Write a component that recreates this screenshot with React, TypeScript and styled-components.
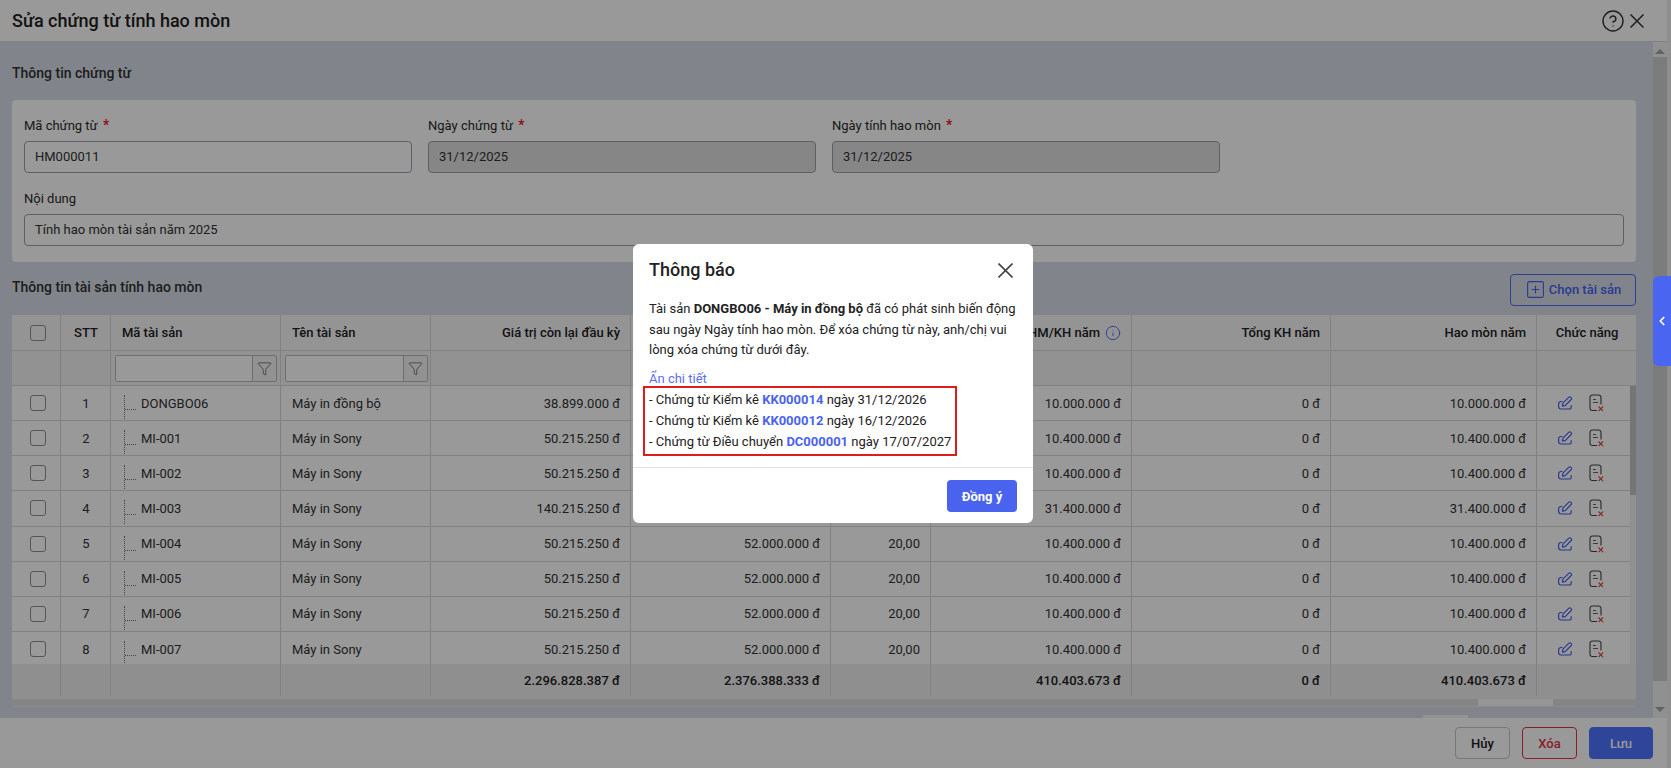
import React from "react";
import styled, { createGlobalStyle } from "styled-components";
import { CircleHelp, Funnel, SquarePlus, Info, ChevronLeft } from "lucide-react";

const Global = createGlobalStyle`
  html, body { margin: 0; padding: 0; height: 100%; overflow: hidden; }
  body { font-family: Roboto, "Noto Sans", sans-serif; color: #212121; background: #e8e8e8; }
  * { box-sizing: border-box; }
`;

const Page = styled.div`
  position: relative; width: 1671px; height: 768px; display: flex; flex-direction: column; overflow: hidden; padding-right: 4px; background: #ededed;
`;
const Header = styled.header`
  height: 42px; flex: none; display: flex; align-items: center; justify-content: space-between; padding: 0 23px 0 12px; background: #fff; border-bottom: 1px solid #d8d8d8;
`;
const PageTitle = styled.h1`
  margin: 0; font-size: 18px; font-weight: 500; color: #212121;
`;
const HeaderIcons = styled.div`
  display: flex; align-items: center; gap: 5px; color: #333; margin-top: 1px;
`;
const Main = styled.div`
  flex: 1; min-height: 0; display: flex; background: #d7dde6;
`;
const Content = styled.main`
  flex: 1; min-width: 0; padding: 0 17px 0 12px; display: flex; flex-direction: column;
`;
const SectionTitle = styled.div`
  font-size: 14px; font-weight: 500; color: #333;
`;
const FirstSection = styled.div`
  height: 58px; flex: none; padding-top: 23px; line-height: 17px;
`;
const Card = styled.section`
  height: 162px; flex: none; background: #fff; border-radius: 4px; padding: 16px 12px 0;
  display: grid; grid-template-columns: repeat(4, 388px); column-gap: 16px; grid-auto-rows: min-content; row-gap: 16px;
`;
const Field = styled.div<{ $full?: boolean }>`
  display: flex; flex-direction: column; gap: 6px; grid-column: ${(p) => (p.$full ? "1 / -1" : "auto")};
  width: ${(p) => (p.$full ? "1600px" : "auto")};
`;
const Label = styled.label`
  font-size: 13px; line-height: 19px; height: 19px; color: #2b2b2b;
  b { color: #e11; font-weight: 500; margin-left: 2px; font-size: 14px; }
`;
const Input = styled.div<{ $disabled?: boolean }>`
  height: 32px; border: 1px solid #9aa0a8; border-radius: 4px; padding: 0 10px; font-size: 13px; line-height: 30px; color: #333;
  background: ${(p) => (p.$disabled ? "#e0e0e0" : "#fff")};
`;
const SectionBar = styled.div`
  height: 53px; flex: none; display: flex; align-items: center; justify-content: space-between; padding-top: 2px;
  & > ${SectionTitle} { margin-top: -5px; }
`;
const OutlineButton = styled.button`
  width: 126px; height: 32px; display: flex; align-items: center; justify-content: center; gap: 3px; padding: 0; border: 1px solid #4d6df2; border-radius: 4px;
  background: transparent; color: #4663ee; font: 500 13px Roboto, sans-serif;
`;
const Table = styled.div`
  flex: none; background: #fff;
`;
const Row = styled.div<{ $kind: "head" | "filter" | "body" | "total" }>`
  display: grid;
  grid-template-columns: 49px 50px 170px 150px 200px 200px 100px 201px 199px 206px ${(p) => (p.$kind === "body" ? "93px" : "99px")};
  height: ${(p) => ({ head: "36px", filter: "35px", body: "35.15px", total: "35px" }[p.$kind])};
  background: ${(p) => ({ head: "#f7f7f7", filter: "#f4f4f4", body: "#fff", total: "#efefef" }[p.$kind])};
  font-weight: ${(p) => (p.$kind === "head" || p.$kind === "total" ? 500 : 400)};
  color: ${(p) => (p.$kind === "head" || p.$kind === "total" ? "#222" : "#333")};
  border-bottom: ${(p) => (p.$kind === "total" ? "3px solid #efefef" : "1px solid #d8d8d8")};
  font-size: 13px;
`;
const Cell = styled.div<{ $align?: "left" | "right" | "center" }>`
  display: flex; align-items: center; padding: 0 10px 0 11px; min-width: 0; white-space: nowrap; border-right: 1px solid #d8d8d8;
  justify-content: ${(p) => (p.$align === "right" ? "flex-end" : p.$align === "center" ? "center" : "flex-start")};
  &:last-child { border-right: none; }
`;
const Checkbox = styled.span`
  width: 16px; height: 16px; border: 1px solid #8f8f8f; border-radius: 3px; background: transparent; flex: none; margin-left: 2px;
`;
const FilterBox = styled.div`
  width: 162px; height: 27px; flex: none; margin-left: -7px; display: flex; border: 1px solid #b8b8b8; border-radius: 2px; background: #f4f4f4;
`;
const FilterBoxSmall = styled(FilterBox)`
  width: 143px;
`;
const FilterField = styled.div`
  flex: 1; background: #fff;
`;
const FilterButton = styled.div`
  width: 24px; flex: none; border-left: 1px solid #b8b8b8; display: flex; align-items: center; justify-content: center; color: #444;
`;
const TreeCode = styled.div`
  position: relative; padding-left: 17px; margin-left: 2px; height: 100%; display: flex; align-items: center;
`;
const TreeLine = styled.span`
  position: absolute; left: 0; top: 9px; height: 24px; width: 11px; border-left: 1px dotted #777;
  &::after { content: ""; position: absolute; left: 0; top: 14px; width: 11px; border-top: 1px dotted #777; }
`;
const InfoIcon = styled(Info)`
  margin-left: 5px; color: #4663ee; flex: none;
`;
const Actions = styled.div`
  display: flex; align-items: center; gap: 16px; margin-left: -7px;
`;
const BodyWrap = styled.div`
  display: flex; height: 278.3px; overflow: hidden;
`;
const Rows = styled.div`
  flex: 1; min-width: 0;
`;
const VRail = styled.div`
  width: 6px; flex: none; background: #f1f1f1;
`;
const VThumb = styled.div`
  height: 109px; background: #c4c4c4;
`;
const HBar = styled.div`
  height: 7px; display: flex; background: #fff;
`;
const HThumb = styled.div<{ $w: number }>`
  width: ${(p) => p.$w}px; background: #dedede;
`;
const HGap = styled.div`
  flex: 1; background: #f8f8f8;
`;
const PageScroll = styled.div`
  flex: 1; border-top: 1px solid #e5e8ec;
`;
const PageThumb = styled.div`
  width: 45px; height: 3px; margin: 8px 0 0 1411px; background: #f6f6f6;
`;
const Rail = styled.div`
  width: 14px; flex: none; background: #f1f1f1; display: flex; flex-direction: column; align-items: center; justify-content: space-between; padding: 7px 0 6px;
`;
const Arrow = styled.span<{ $up?: boolean }>`
  width: 0; height: 0; border-left: 5px solid transparent; border-right: 5px solid transparent;
  ${(p) => (p.$up ? "border-bottom: 5px solid #a4a4a4;" : "border-top: 5px solid #a4a4a4;")}
`;
const RailThumb = styled.div`
  flex: 1; width: 100%; margin: 3px 0 26px; background: #cfcfcf;
`;
const Footer = styled.footer`
  height: 50px; flex: none; background: #fff; display: flex; align-items: center; justify-content: flex-end; gap: 12px; padding: 0 14px 0 0;
`;
const FootButton = styled.button<{ $tone: "plain" | "danger" | "primary" }>`
  height: 32px; border-radius: 4px; font: 500 13px Roboto, sans-serif; padding: 0;
  width: ${(p) => (p.$tone === "primary" ? "64px" : "55px")};
  border: 1px solid ${(p) => (p.$tone === "plain" ? "#c8c8c8" : p.$tone === "danger" ? "#e0344a" : "#4e73ff")};
  background: ${(p) => (p.$tone === "primary" ? "#4e73ff" : "#fff")};
  color: ${(p) => (p.$tone === "plain" ? "#222" : p.$tone === "danger" ? "#e0344a" : "#fff")};
`;
const Overlay = styled.div`
  position: absolute; inset: 0; padding-right: 5px; background: rgba(0, 0, 0, 0.4); display: flex; align-items: center; justify-content: center; z-index: 5;
`;
const Modal = styled.div`
  width: 400px; height: 279px; margin-top: -1px; background: #fff; border-radius: 6px; display: flex; flex-direction: column;
`;
const ModalHead = styled.div`
  height: 50px; flex: none; padding: 2px 20px 0 16px; display: flex; align-items: center; justify-content: space-between;
`;
const ModalTitle = styled.h2`
  margin: 0 0 1px; font-size: 18px; font-weight: 500; color: #222;
`;
const CloseGlyph = styled.svg`
  flex: none; stroke: #444; fill: none;
`;
const ModalBody = styled.div`
  flex: 1; padding: 5px 10px 0 16px; font-size: 13px; color: #222;
`;
const Message = styled.p`
  margin: 0; line-height: 20.5px; b { font-weight: 700; }
`;
const Toggle = styled.a`
  display: block; margin-top: 9px; line-height: 17px; color: #5a6ff5; text-decoration: none;
`;
const DetailBox = styled.div`
  width: 314px; height: 70px; margin: -0.5px 0 0 -6px; border: 2px solid #e01b1b; padding: 1px 0 0 4px; white-space: nowrap;
`;
const DetailLine = styled.div`
  line-height: 21px;
  b { color: #4a63ee; font-weight: 700; }
`;
const ModalFoot = styled.div`
  height: 56px; flex: none; border-top: 1px solid #e2e2e2; display: flex; align-items: flex-start; justify-content: flex-end; padding: 12px 16px 0 0;
`;
const ConfirmButton = styled.button`
  width: 70px; height: 32px; border: none; border-radius: 4px; background: #4a63ee; color: #fff; font: 700 13px Roboto, sans-serif; padding: 0;
`;
const SideTab = styled.div`
  position: absolute; right: 0; top: 276px; width: 18px; height: 90px; background: #4a66f0; border-radius: 6px 0 0 6px; z-index: 6; display: flex; align-items: center; justify-content: center; color: #fff;
`;

const EditIcon = () => (
  <svg width="16" height="16" viewBox="0 0 16 16" fill="none" stroke="#4663ee" strokeWidth="1.2" strokeLinejoin="round" strokeLinecap="round">
    <path d="M5 6.5H4a2.4 2.4 0 0 0-2.4 2.4v2.7A2.4 2.4 0 0 0 4 14H12.4a1.8 1.8 0 0 0 1.8-1.8V10.5" />
    <path d="M5.4 11.2l.5-3 6-6a1.3 1.3 0 0 1 1.9 0l.4.4a1.3 1.3 0 0 1 0 1.9l-6 6.1z" />
  </svg>
);
const DeleteIcon = () => (
  <svg width="16" height="18" viewBox="0 0 16 18" fill="none">
    <path d="M7.5 16.5H3.5A2.5 2.5 0 0 1 1 14V3.5A2.5 2.5 0 0 1 3.5 1h6A2.5 2.5 0 0 1 12 3.5V10" stroke="#444" strokeWidth="1.1" strokeLinecap="round" />
    <path d="M4 5.5h3M4 8.5h5" stroke="#666" strokeWidth="1.1" />
    <path d="M9.5 12.5l4.6 4.6M14.1 12.5l-4.6 4.6" stroke="#e0443a" strokeWidth="1.1" />
  </svg>
);

const data = [
  ["DONGBO06", "Máy in đồng bộ", "38.899.000 đ", "", "", "10.000.000 đ", "10.000.000 đ"],
  ["MI-001", "Máy in Sony", "50.215.250 đ", "", "", "10.400.000 đ", "10.400.000 đ"],
  ["MI-002", "Máy in Sony", "50.215.250 đ", "", "", "10.400.000 đ", "10.400.000 đ"],
  ["MI-003", "Máy in Sony", "140.215.250 đ", "", "", "31.400.000 đ", "31.400.000 đ"],
  ["MI-004", "Máy in Sony", "50.215.250 đ", "52.000.000 đ", "20,00", "10.400.000 đ", "10.400.000 đ"],
  ["MI-005", "Máy in Sony", "50.215.250 đ", "52.000.000 đ", "20,00", "10.400.000 đ", "10.400.000 đ"],
  ["MI-006", "Máy in Sony", "50.215.250 đ", "52.000.000 đ", "20,00", "10.400.000 đ", "10.400.000 đ"],
  ["MI-007", "Máy in Sony", "50.215.250 đ", "52.000.000 đ", "20,00", "10.400.000 đ", "10.400.000 đ"],
];

export default function App() {
  return (
    <Page>
      <Global />
      <Header>
        <PageTitle>Sửa chứng từ tính hao mòn</PageTitle>
        <HeaderIcons>
          <CircleHelp size={24} strokeWidth={1.4} />
          <svg width="14" height="14" viewBox="0 0 14 14" fill="none" stroke="currentColor" strokeWidth="1.5"><path d="M.5.5l13 13M13.5.5l-13 13" /></svg>
        </HeaderIcons>
      </Header>
      <Main>
        <Content>
          <FirstSection><SectionTitle>Thông tin chứng từ</SectionTitle></FirstSection>
          <Card>
            <Field><Label>Mã chứng từ <b>*</b></Label><Input>HM000011</Input></Field>
            <Field><Label>Ngày chứng từ <b>*</b></Label><Input $disabled>31/12/2025</Input></Field>
            <Field><Label>Ngày tính hao mòn <b>*</b></Label><Input $disabled>31/12/2025</Input></Field>
            <div />
            <Field $full><Label>Nội dung</Label><Input>Tính hao mòn tài sản năm 2025</Input></Field>
          </Card>
          <SectionBar>
            <SectionTitle>Thông tin tài sản tính hao mòn</SectionTitle>
            <OutlineButton><SquarePlus size={21} strokeWidth={1.3} />Chọn tài sản</OutlineButton>
          </SectionBar>
          <Table>
            <Row $kind="head">
              <Cell $align="center"><Checkbox /></Cell>
              <Cell $align="center">STT</Cell>
              <Cell>Mã tài sản</Cell>
              <Cell>Tên tài sản</Cell>
              <Cell $align="right">Giá trị còn lại đầu kỳ</Cell>
              <Cell />
              <Cell />
              <Cell $align="right">Giá trị HM/KH năm<InfoIcon size={16} strokeWidth={1.4} /></Cell>
              <Cell $align="right">Tổng KH năm</Cell>
              <Cell $align="right">Hao mòn năm</Cell>
              <Cell $align="center">Chức năng</Cell>
            </Row>
            <Row $kind="filter">
              <Cell /><Cell />
              <Cell><FilterBox><FilterField /><FilterButton><Funnel size={15} strokeWidth={1.1} /></FilterButton></FilterBox></Cell>
              <Cell><FilterBoxSmall><FilterField /><FilterButton><Funnel size={15} strokeWidth={1.1} /></FilterButton></FilterBoxSmall></Cell>
              <Cell /><Cell /><Cell /><Cell /><Cell /><Cell /><Cell />
            </Row>
            <BodyWrap>
              <Rows>
                {data.map((d, i) => (
                  <Row $kind="body" key={d[0]}>
                    <Cell $align="center"><Checkbox /></Cell>
                    <Cell $align="center">{i + 1}</Cell>
                    <Cell><TreeCode><TreeLine />{d[0]}</TreeCode></Cell>
                    <Cell>{d[1]}</Cell>
                    <Cell $align="right">{d[2]}</Cell>
                    <Cell $align="right">{d[3]}</Cell>
                    <Cell $align="right">{d[4]}</Cell>
                    <Cell $align="right">{d[5]}</Cell>
                    <Cell $align="right">0 đ</Cell>
                    <Cell $align="right">{d[6]}</Cell>
                    <Cell $align="center"><Actions><EditIcon /><DeleteIcon /></Actions></Cell>
                  </Row>
                ))}
              </Rows>
              <VRail><VThumb /></VRail>
            </BodyWrap>
            <Row $kind="total">
              <Cell /><Cell /><Cell /><Cell />
              <Cell $align="right">2.296.828.387 đ</Cell>
              <Cell $align="right">2.376.388.333 đ</Cell>
              <Cell />
              <Cell $align="right">410.403.673 đ</Cell>
              <Cell $align="right">0 đ</Cell>
              <Cell $align="right">410.403.673 đ</Cell>
              <Cell />
            </Row>
            <HBar><HThumb $w={1466} /><HGap /><HThumb $w={83} /></HBar>
          </Table>
          <PageScroll><PageThumb /></PageScroll>
        </Content>
        <Rail><Arrow $up /><RailThumb /><Arrow /></Rail>
      </Main>
      <Footer>
        <FootButton $tone="plain">Hủy</FootButton>
        <FootButton $tone="danger">Xóa</FootButton>
        <FootButton $tone="primary">Lưu</FootButton>
      </Footer>
      <Overlay>
        <Modal>
          <ModalHead>
            <ModalTitle>Thông báo</ModalTitle>
            <CloseGlyph width="15" height="15" viewBox="0 0 15 15" strokeWidth="1.6"><path d="M.5.5l14 14M14.5.5l-14 14" /></CloseGlyph>
          </ModalHead>
          <ModalBody>
            <Message>Tài sản <b>DONGBO06 - Máy in đồng bộ</b> đã có phát sinh biến động sau ngày Ngày tính hao mòn. Để xóa chứng từ này, anh/chị vui lòng xóa chứng từ dưới đây.</Message>
            <Toggle>Ẩn chi tiết</Toggle>
            <DetailBox>
              <DetailLine>- Chứng từ Kiểm kê <b>KK000014</b> ngày 31/12/2026</DetailLine>
              <DetailLine>- Chứng từ Kiểm kê <b>KK000012</b> ngày 16/12/2026</DetailLine>
              <DetailLine>- Chứng từ Điều chuyển <b>DC000001</b> ngày 17/07/2027</DetailLine>
            </DetailBox>
          </ModalBody>
          <ModalFoot><ConfirmButton>Đồng ý</ConfirmButton></ModalFoot>
        </Modal>
      </Overlay>
      <SideTab><ChevronLeft size={14} strokeWidth={3} /></SideTab>
    </Page>
  );
}
